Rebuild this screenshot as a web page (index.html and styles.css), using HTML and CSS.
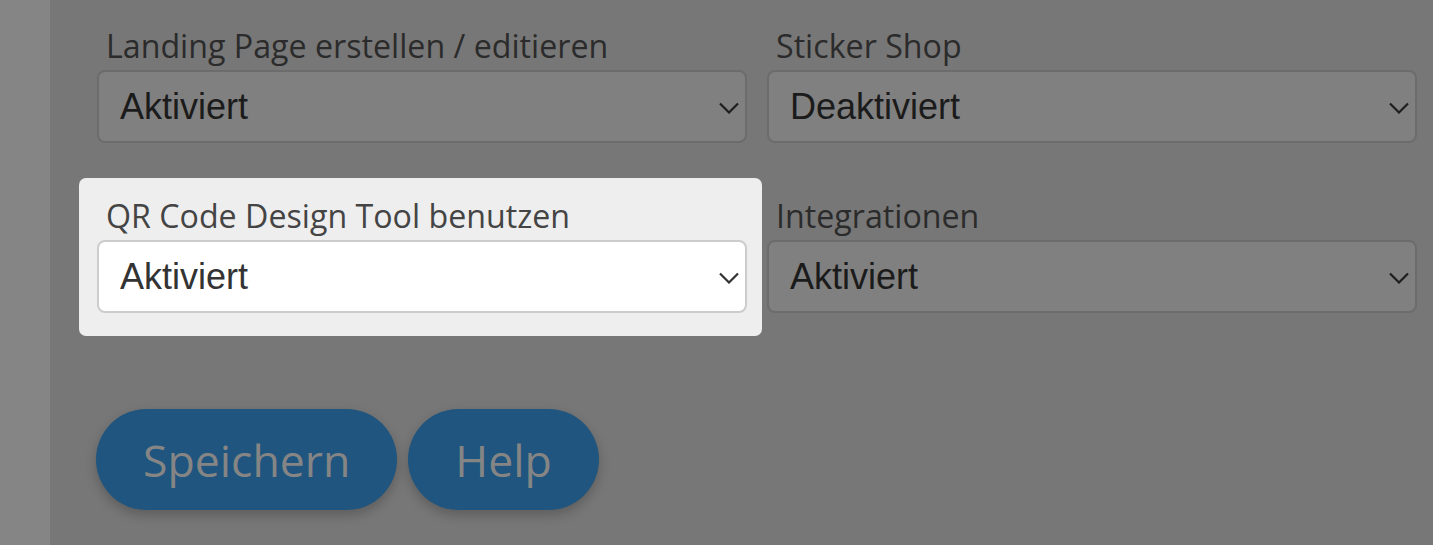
FILE: index.html
```html
<!DOCTYPE html>
<html lang="de">
<head>
<meta charset="utf-8">
<title>Einstellungen</title>
<link rel="stylesheet" href="styles.css">
</head>
<body>
<div class="layout">
  <aside class="side"></aside>
  <main class="main">
    <div class="grid">
      <div class="field">
        <div class="label">Landing Page erstellen / editieren</div>
        <div class="select"><span>Aktiviert</span><svg class="chev" width="20" height="12" viewBox="0 0 20 12"><path d="M1 1.5 L10 10.5 L19 1.5" fill="none" stroke="currentColor" stroke-width="2.2"/></svg></div>
      </div>
      <div class="field">
        <div class="label">Sticker Shop</div>
        <div class="select"><span>Deaktiviert</span><svg class="chev" width="20" height="12" viewBox="0 0 20 12"><path d="M1 1.5 L10 10.5 L19 1.5" fill="none" stroke="currentColor" stroke-width="2.2"/></svg></div>
      </div>
      <div class="field highlight">
        <div class="label">QR Code Design Tool benutzen</div>
        <div class="select"><span>Aktiviert</span><svg class="chev" width="20" height="12" viewBox="0 0 20 12"><path d="M1 1.5 L10 10.5 L19 1.5" fill="none" stroke="currentColor" stroke-width="2.2"/></svg></div>
      </div>
      <div class="field">
        <div class="label">Integrationen</div>
        <div class="select"><span>Aktiviert</span><svg class="chev" width="20" height="12" viewBox="0 0 20 12"><path d="M1 1.5 L10 10.5 L19 1.5" fill="none" stroke="currentColor" stroke-width="2.2"/></svg></div>
      </div>
    </div>
    <div class="actions">
      <button class="btn">Speichern</button>
      <button class="btn">Help</button>
    </div>
  </main>
</div>
</body>
</html>
```

FILE: styles.css
```css
html, body {
  margin: 0;
  padding: 0;
  height: 100%;
}
body {
  background: #777777;
  font-family: "Open Sans", "Liberation Sans", sans-serif;
  overflow: hidden;
}
.layout {
  display: flex;
  height: 545px;
}
.side {
  width: 50px;
  flex: none;
  background: #858585;
}
.main {
  flex: 1;
  padding: 24px 16px 0 47px;
}
.grid {
  display: grid;
  grid-template-columns: 650px 650px;
  column-gap: 20px;
  row-gap: 51px;
}
.field {
  display: flex;
  flex-direction: column;
}
.label {
  font-size: 32.2px;
  line-height: 44px;
  color: #2b2b2b;
  padding-left: 9px;
  margin-bottom: 2px;
}
.select {
  box-sizing: border-box;
  height: 73px;
  border: 2px solid #6c6c6c;
  border-radius: 8px;
  background: #808080;
  display: flex;
  align-items: center;
  justify-content: space-between;
  padding: 0 6px 0 21px;
  font-family: "Liberation Sans", Arial, sans-serif;
  font-size: 36px;
  color: #1b1b1b;
}
.chev {
  color: #1e1e1e;
  margin-top: 2px;
}
.highlight {
  background: #eeeeee;
  border-radius: 7px;
  margin: -16px -15px -23px -18px;
  padding: 16px 15px 23px 18px;
}
.highlight .label {
  color: #444444;
}
.highlight .select {
  background: #ffffff;
  border-color: #cccccc;
  color: #333333;
}
.highlight .chev {
  color: #333333;
}
.actions {
  display: flex;
  gap: 11px;
  margin-top: 96px;
  margin-left: -1px;
}
.btn {
  font-family: "Open Sans", sans-serif;
  font-size: 44.6px;
  line-height: 61px;
  padding: 20px 47px;
  border: none;
  border-radius: 51px;
  background: #1f557e;
  color: #858585;
  box-shadow: 0 5px 12px rgba(0, 0, 0, 0.22);
}
```
